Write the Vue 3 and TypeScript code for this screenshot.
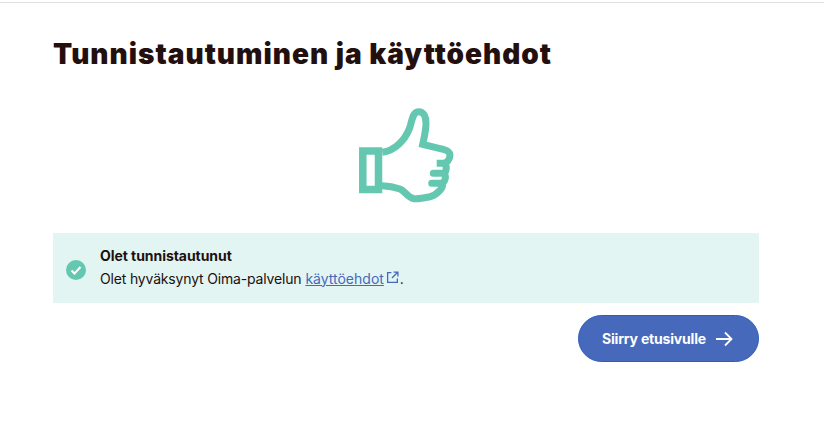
<template>
  <div class="page">
    <main class="content">
      <h1 class="title">Tunnistautuminen ja käyttöehdot</h1>
      <div class="illustration">
        <svg class="thumb" viewBox="0 0 96 98" width="96" height="98" fill="none" stroke="#64c8b0" stroke-width="7">
          <rect x="4.800" y="46" width="15.700" height="38.500" stroke-width="7.500" />
          <path d="M24.300 47.300C36 46 47 36 52 22C54 15 55 7 60.300 6.700C66 6.500 68 12 68 18.300C68 26 66 33 64.700 39.300L85.300 44.300C90 45.500 92 47 92 50C92 54 89 58.300 85.300 58.300H78.700" stroke-linejoin="miter" />
          <path d="M86 58.300C89 60 89 66 86 68.300H75.300M86 68.300C88.500 71 87.500 76 84.500 78.300H73.700M84.500 78.300C86 83 78 90.500 72 91.700C66 93 60 94.500 55.300 93.500C49 92 47 86 42 84C36 82 30 81 24.300 80.700" stroke-linecap="round" />
        </svg>
      </div>
      <div class="alert">
        <svg class="alert-icon" viewBox="0 0 20 20" width="20" height="20">
          <circle cx="10" cy="10" r="10" fill="#64c8b0" />
          <path d="M5.500 10.500L8.500 13.500L14.500 7" fill="none" stroke="#fff" stroke-width="2" />
        </svg>
        <div class="alert-text">
          <div class="alert-title">Olet tunnistautunut</div>
          <div class="alert-body">
            <span class="tight">Olet hyväksynyt Oima-palvelun</span>
            {{ ' ' }}<a class="terms" href="#">käyttöehdot</a>
            <svg class="external" viewBox="0 0 12 12" width="13" height="13" fill="none" stroke="#4769bc" stroke-width="1.200">
              <path d="M5 1.500H1.500V10.500H10.500V7" />
              <path d="M7 1H11V5M11 1L5.500 6.500" />
            </svg><span class="stop">.</span>
          </div>
        </div>
      </div>
      <div class="actions">
        <button class="primary" type="button">
          <span>Siirry etusivulle</span>
          <svg viewBox="0 0 18 16" width="18" height="16" fill="none" stroke="#fff" stroke-width="1.800">
            <path d="M1 8H16.500M10 1.500L16.500 8L10 14.500" />
          </svg>
        </button>
      </div>
    </main>
  </div>
</template>

<script setup lang="ts">
</script>

<style>
html,
body {
  margin: 0;
  background: #fff;
}
</style>

<style scoped>
.page {
  width: 824px;
  height: 448px;
  box-sizing: border-box;
  padding-top: 2px;
  font-family: Inter, "Liberation Sans", sans-serif;
  color: #1c1010;
}

.content {
  border-top: 1px solid #e0e0e0;
  padding: 33px 65px 0 53px;
}

.title {
  margin: 0;
  font-family: Inter, "Liberation Sans", sans-serif;
  font-weight: 900;
  font-size: 28px;
  line-height: 36px;
  letter-spacing: 1px;
  color: #240f0f;
}

.illustration {
  display: flex;
  justify-content: center;
  margin-top: 33px;
}

.thumb {
  display: block;
}

.alert {
  display: flex;
  align-items: center;
  gap: 14px;
  height: 70px;
  margin-top: 30px;
  padding-left: 13px;
  background: #e2f5f2;
  font-size: 14px;
  line-height: 24px;
}

.alert-icon {
  margin-top: 3px;
}

.alert-text {
  margin-bottom: 2px;
}

.alert-title {
  font-weight: 700;
  line-height: 23px;
  letter-spacing: -0.05px;
}

.tight {
  letter-spacing: -0.17px;
}

.terms {
  color: #4769bc;
}

.external {
  margin-left: 2px;
  vertical-align: 0;
}

.stop {
  margin-left: 1px;
}

.actions {
  display: flex;
  justify-content: flex-end;
  margin-top: 12px;
}

.primary {
  display: flex;
  align-items: center;
  justify-content: center;
  gap: 9px;
  width: 181px;
  height: 47px;
  padding: 0 2px 0 0;
  border: 1px solid #2f5cbd;
  border-radius: 24px;
  background: #4769bc;
  color: #fff;
  font-family: inherit;
  font-size: 14px;
  font-weight: 700;
  letter-spacing: -0.18px;
}
</style>
